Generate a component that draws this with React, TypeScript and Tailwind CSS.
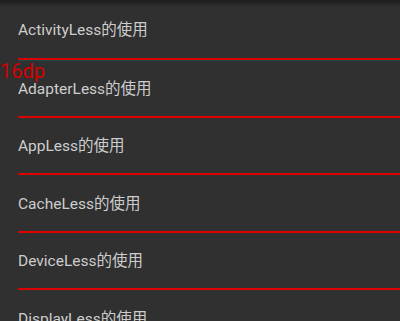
import React from 'react';

const items = [
  { label: 'ActivityLess的使用', h: 'h-[58px]' },
  { label: 'AdapterLess的使用', h: 'h-[55px]' },
  { label: 'AppLess的使用', h: 'h-[55px]' },
  { label: 'CacheLess的使用', h: 'h-[56px]' },
  { label: 'DeviceLess的使用', h: 'h-[55px]' },
  { label: 'DisplayLess的使用', h: 'h-[56px]' },
];

export default function App() {
  return (
    <div className="relative h-[321px] w-[400px] overflow-hidden bg-[#303030] font-['Roboto','Noto_Sans_CJK_SC',sans-serif]">
      {/* toolbar shadow */}
      <div className="absolute inset-x-0 top-0 h-[7px] bg-gradient-to-b from-[#1c1c1c] to-transparent" />

      <div>
        {items.map((item, i) => (
          <div key={item.label}>
            <div className={`flex ${item.h} items-center pl-[18px] pt-[3px] text-[15.5px] text-[#cdcdcd]`}>{item.label}</div>
            <div className="ml-[18px] h-[2px] bg-[#dc0000]" />
            {i === 0 && <div className="ml-[18px] h-px bg-[#1e4842]" />}
          </div>
        ))}
      </div>

      {/* dimension annotation */}
      <div className="absolute left-0 top-[61px] text-[20px] leading-none text-[#d40000]">16dp</div>
    </div>
  );
}
